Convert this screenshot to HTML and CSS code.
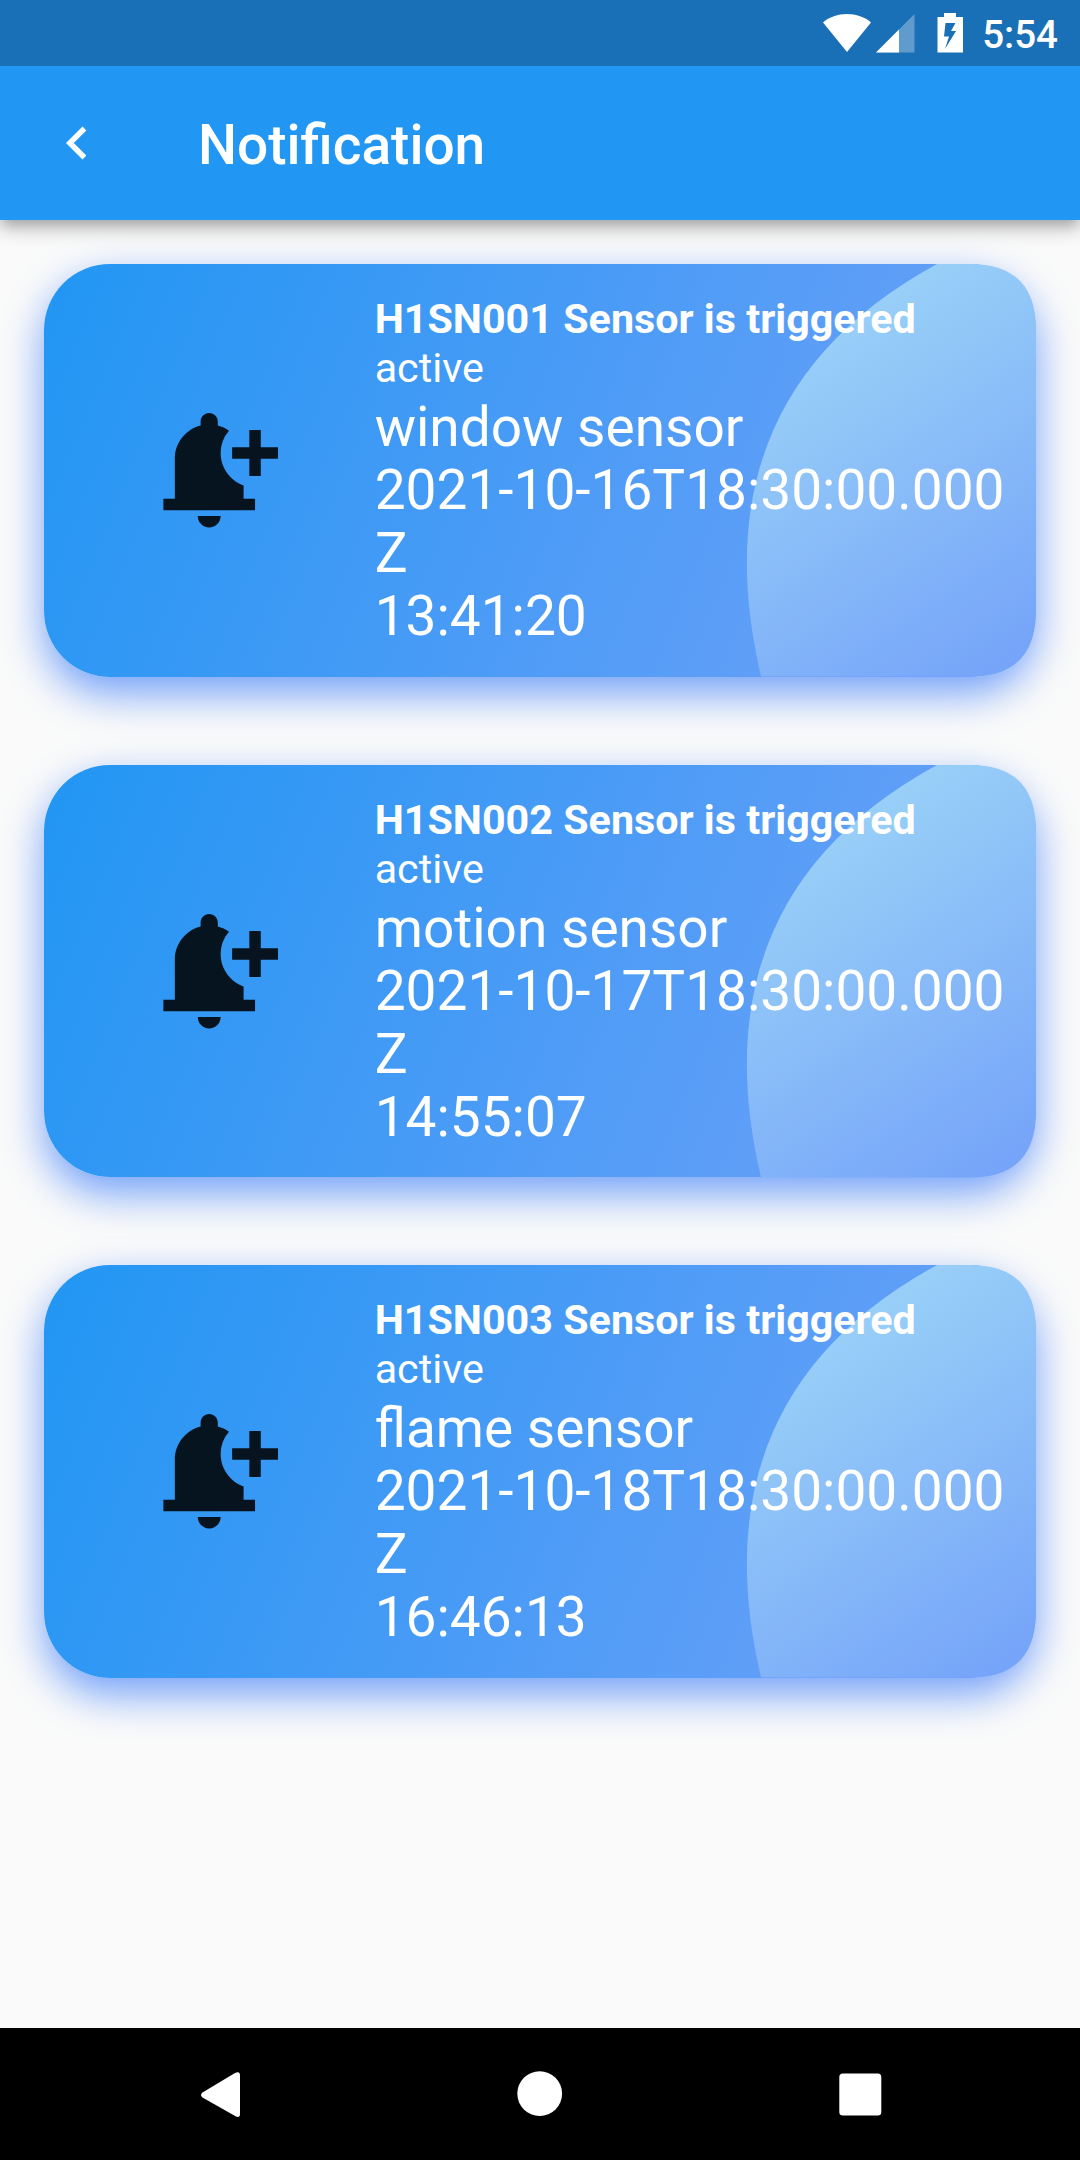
FILE: index.html
```html
<!DOCTYPE html>
<html lang="en">
<head>
<meta charset="utf-8">
<title>Notification</title>
<link rel="stylesheet" href="styles.css">
</head>
<body>
<svg class="defs" width="0" height="0" aria-hidden="true">
  <defs>
    <linearGradient id="swoosh-fill" gradientUnits="userSpaceOnUse" x1="0" y1="0" x2="275" y2="412.5">
      <stop offset="0" stop-color="#a1daf7"/>
      <stop offset="1" stop-color="#73a1f9"/>
    </linearGradient>
    <symbol id="bell-add" viewBox="-.08 -.08 24 24" overflow="visible">
      <path d="M10 20h4c0 1.1-.9 2-2 2s-2-.9-2-2zm4-11c0 2.61 1.67 4.83 4 5.66V17h2v2H4v-2h2v-7c0-2.79 1.91-5.14 4.5-5.8v-.7c0-.83.67-1.5 1.5-1.5s1.5.67 1.5 1.5v.7c.71.18 1.36.49 1.95.9A5.902 5.902 0 0 0 14 9zm10-1h-3V5h-2v3h-3v2h3v3h2v-3h3V8z"/>
    </symbol>
    <path id="swoosh" fill="url(#swoosh-fill)" d="M0 412.5H209Q275 412.5 275 346.5V66Q275 0 209 0H176Q-66 132 0 412.5Z"/>
  </defs>
</svg>
<div class="screen">
  <div class="status-bar">
    <svg class="wifi" width="48" height="38" viewBox="0 0 48 38"><path fill="#fff" d="M24 38 0 8.500C6 3 15 0 24 0S42 3 48 8.500Z"/></svg>
    <svg class="signal" width="39" height="39" viewBox="0 0 39 39"><path fill="#fff" fill-opacity=".3" d="M0 38.500 38.500 0V38.500Z"/><path fill="#fff" d="M0 38.500 23 15.500V38.500Z"/></svg>
    <svg class="battery" width="26" height="40" viewBox="0 0 26 40"><path fill="#fff" fill-rule="evenodd" d="M7 0H19V4H26V39.500H.5V4H7ZM8.500 10 7 23.500H12L8 36 19 18H14L18.500 10Z"/></svg>
    <span class="clock">5:54</span>
  </div>
  <header class="app-bar">
    <svg class="back" width="66" height="66" viewBox="0 0 24 24"><path fill="#fff" d="M15.410 16.590 10.830 12l4.580-4.590L14 6l-6 6 6 6z"/></svg>
    <h1 class="title">Notification</h1>
  </header>
  <main class="list">
    <article class="card">
      <svg class="swoosh"><use href="#swoosh"/></svg>
      <div class="icon-cell"><svg class="bell"><use href="#bell-add"/></svg></div>
      <div class="details">
        <h2 class="name">H1SN001 Sensor is triggered</h2>
        <p class="state">active</p>
        <p class="line">window sensor</p>
        <p class="line">2021-10-16T18:30:00.000Z</p>
        <p class="line">13:41:20</p>
      </div>
    </article>
    <article class="card">
      <svg class="swoosh"><use href="#swoosh"/></svg>
      <div class="icon-cell"><svg class="bell"><use href="#bell-add"/></svg></div>
      <div class="details">
        <h2 class="name">H1SN002 Sensor is triggered</h2>
        <p class="state">active</p>
        <p class="line">motion sensor</p>
        <p class="line">2021-10-17T18:30:00.000Z</p>
        <p class="line">14:55:07</p>
      </div>
    </article>
    <article class="card">
      <svg class="swoosh"><use href="#swoosh"/></svg>
      <div class="icon-cell"><svg class="bell"><use href="#bell-add"/></svg></div>
      <div class="details">
        <h2 class="name">H1SN003 Sensor is triggered</h2>
        <p class="state">active</p>
        <p class="line">flame sensor</p>
        <p class="line">2021-10-18T18:30:00.000Z</p>
        <p class="line">16:46:13</p>
      </div>
    </article>
  </main>
  <nav class="nav-bar">
    <svg width="46" height="46" viewBox="0 0 46 46"><path fill="#fff" d="M4.500 21.500 37 2Q42-.5 42 4.500V43Q42 47 38 45.500L4.500 26.500Q1.500 24 4.500 21.500Z"/></svg>
    <svg width="46" height="46" viewBox="0 0 46 46"><circle cx="21.700" cy="22.600" r="22.400" fill="#fff"/></svg>
    <svg width="46" height="46" viewBox="0 0 46 46"><rect x="2.300" y="2.500" width="42" height="42" rx="3.500" fill="#fff"/></svg>
  </nav>
</div>
</body>
</html>
```
FILE: styles.css
```css
* { box-sizing: border-box; }

body {
  margin: 0;
  font-family: Roboto, sans-serif;
  color: #fff;
  background: #fafafa;
}

.defs { position: absolute; }

.screen {
  display: flex;
  flex-direction: column;
  width: 1080px;
  height: 2160px;
  overflow: hidden;
}

.status-bar {
  display: flex;
  align-items: flex-start;
  justify-content: flex-end;
  flex: none;
  height: 66px;
  padding-right: 22px;
  background: #1a70b6;
  position: relative;
  z-index: 2;
}

.wifi { margin: 14px 5px 0 0; }
.signal { margin: 14px 22px 0 0; }
.battery { margin: 13px 19px 0 0; }

.clock {
  margin-top: 12px;
  font-size: 38.5px;
  font-weight: 500;
  line-height: 45px;
}

.app-bar {
  display: flex;
  align-items: center;
  flex: none;
  height: 154px;
  padding-left: 44px;
  background: #2196f3;
  box-shadow: 0 5px 11px -3px rgba(0, 0, 0, .2), 0 11px 14px rgba(0, 0, 0, .14), 0 3px 27px rgba(0, 0, 0, .12);
}

.back { flex: none; }

.title {
  margin: 4px 0 0 88px;
  font-size: 55px;
  font-weight: 500;
  line-height: 64px;
}

.list {
  display: flex;
  flex-direction: column;
  flex: 1;
  gap: 88px;
  padding: 44px;
}

.card {
  position: relative;
  display: grid;
  grid-template-columns: 1fr 2fr;
  align-items: center;
  flex: none;
  height: 412.5px;
  border-radius: 66px;
  background: linear-gradient(112.58deg, #2196f3, #73a1f9);
  box-shadow: 0 16.5px 41px #73a1f9;
}

.swoosh {
  position: absolute;
  top: 0;
  right: 0;
  width: 275px;
  height: 412.5px;
  overflow: visible;
}

.icon-cell {
  display: flex;
  justify-content: center;
}

.bell {
  width: 137.5px;
  height: 137.5px;
  margin: 0 1px 1px 0;
  fill: #000;
  fill-opacity: .87;
  overflow: visible;
}

.details {
  position: relative;
  padding: 3px 12px 0 0;
}

.name,
.state {
  margin: 0;
  font-size: 41.25px;
  line-height: 49px;
}

.name { font-weight: 700; }

.state {
  margin-bottom: 3px;
  font-weight: 400;
}

.line {
  margin: 0;
  font-size: 55px;
  line-height: 63px;
  word-break: break-all;
}

.nav-bar {
  display: flex;
  align-items: center;
  justify-content: space-between;
  flex: none;
  height: 132px;
  padding: 0 197px 0 198px;
  background: #000;
}

.nav-bar svg { overflow: visible; }
```
